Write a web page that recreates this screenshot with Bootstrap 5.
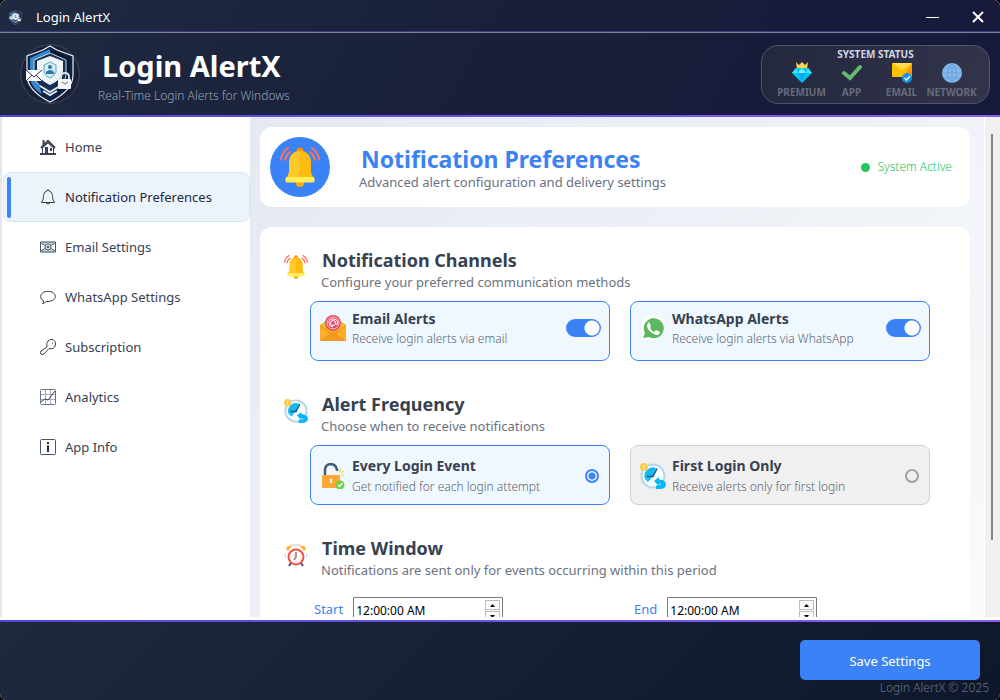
<!DOCTYPE html>
<html lang="en">
<head>
<meta charset="utf-8">
<meta name="viewport" content="width=device-width, initial-scale=1">
<title>Login AlertX</title>
<link href="https://cdn.jsdelivr.net/npm/bootstrap@5.3.0/dist/css/bootstrap.min.css" rel="stylesheet">
<style>
  body { font-family: "Noto Sans", "Open Sans", sans-serif; background: #000; font-size: 13px; line-height: 18px; color: #374151; }
  .app-window { border-radius: 6px; background: #fff; }
  .app-top { background: linear-gradient(120deg, #1f2a40, #191f3a 50%, #17193a); border-bottom: 2px solid; border-image: linear-gradient(90deg, #4f46e5, #8b5cf6) 1; }
  .title-bar { height: 33px; border-bottom: 1px solid #7d8096; box-shadow: inset 0 -1px #3f3a80; color: #fff; padding: 2px 0 0 8px; gap: 13px; }
  .win-btn { width: 45px; height: 30px; border: 0; background: none; color: #fff; }
  .app-header { height: 82px; padding: 0 10px 0 20px; }
  .brand { padding: 6px 0 0 18px; }
  .brand-title { font-size: 29px; line-height: 34px; font-weight: 700; color: #fff; padding-left: 4px; }
  .brand-sub { font-size: 12px; line-height: 18px; font-weight: 300; color: #94a3b8; }
  .status-panel { width: 229px; border: 1px solid #4f5468; border-radius: 17px; background: linear-gradient(100deg, #23283e, #32344a); height: 59px; margin-top: 1px; }
  .status-title { font-size: 10px; line-height: 16px; font-weight: 700; color: #cfd6e4; }
  .status-row { padding-left: 2px; }
  .status-item { width: 50px; font-size: 10px; line-height: 18px; font-weight: 700; color: #666a7a; }
  .side-nav { width: 250px; border-left: 2px solid #e5e5ec; background: #fff; padding-top: 5px; }
  .side-link { height: 50px; padding-left: 36px; gap: 9px; color: #374151; text-decoration: none; border: 1px solid transparent; border-radius: 8px; position: relative; margin-left: 1px; }
  .side-link.active { background: #ebf3fb; border-color: #d6e5f7; color: #1e293b; }
  .side-link.active::before { content: ""; position: absolute; left: 3px; top: 4px; bottom: 3px; width: 4px; border-radius: 2px; background: #3b82f6; }
  .workspace { background: linear-gradient(135deg, #e4e9f2, #f8fafc); padding: 10px 14px 0 10px; }
  .panel { background: #fff; border-radius: 12px; }
  .page-head { height: 80px; padding: 0 18px 0 10px; margin-bottom: 20px; }
  .page-icon { width: 60px; height: 60px; border-radius: 50%; background: #3b82f6; }
  .page-text { padding: 2px 0 0 29px; }
  .page-title { font-size: 23px; line-height: 28px; font-weight: 700; color: #3b82f6; padding-left: 2px; }
  .muted-line { color: #6b7280; }
  .state-dot { width: 9px; height: 9px; border-radius: 50%; background: #22c55e; }
  .state-text { color: #22c55e; font-size: 12px; font-weight: 300; }
  .settings { padding: 20px 40px 0 24px; }
  .setting-group { margin-bottom: 30px; }
  .group-text { padding-left: 13px; }
  .group-title { font-size: 18px; line-height: 26px; font-weight: 700; color: #374151; padding-left: 1px; }
  .group-icon { margin-top: 8px; width: 24px; height: 24px; }
  .choices { display: grid; grid-template-columns: 1fr 1fr; gap: 20px; margin: 10px 0 0 26px; }
  .choice { height: 60px; padding: 1px 8px 0 9px; gap: 6px; border: 1px solid #3b82f6; border-radius: 8px; background: #f0f8ff; }
  .choice.channel { padding-bottom: 7px; }
  .choice.idle { background: #f0f0f0; border-color: #d0d0c4; }
  .choice-title { font-size: 14px; line-height: 22px; font-weight: 700; color: #374151; }
  .choice-sub { font-size: 12px; line-height: 20px; font-weight: 300; color: #5b6472; }
  .channel .choice-sub { line-height: 18px; }
  .switch-input { appearance: none; width: 35px; height: 18px; border-radius: 9px; background: radial-gradient(circle at 26px 9px, #fff 7px, #3b82f6 8px); margin: 0; }
  .radio-input { appearance: none; width: 14px; height: 14px; border-radius: 50%; border: 2px solid #9ca3af; margin: 0 2px 0 0; }
  .radio-input:checked { border-color: #3b82f6; background: radial-gradient(circle, #3b82f6 3px, transparent 4px); }
  .times { display: grid; grid-template-columns: 1fr 1fr; gap: 20px; margin: 18px 0 0 26px; }
  .times label { padding: 0 10px 0 4px; color: #3b82f6; line-height: 24px; }
  .time-box { width: 150px; height: 28px; border: 1px solid #7a7a7a; border-radius: 1px; padding: 2px 2px 2px 0; }
  .time-box input { border: 0; outline: 0; width: 1px; padding: 0 2px; font-size: 12px; color: #000; }
  .spinner-pair { gap: 1px; }
  .spin-btn { width: 15px; height: 10px; border: 1px solid #bcbcbc; background: #fbfbfb; padding: 0; line-height: 0; }
  .scroll-track { width: 16px; background: #f0f0f0; border-left: 1px solid #fff; padding-top: 17px; }
  .scroll-thumb { width: 2px; height: 84%; margin-left: 6px; background: #858585; }
  .app-footer { height: 80px; border-top: 2px solid; border-image: linear-gradient(90deg, #4f46e5, #8b5cf6) 1; background: linear-gradient(135deg, #1e293b, #0f172a); padding: 18px 20px 0; margin-top: 3px; }
  .save-btn { width: 180px; height: 40px; border: 0; border-radius: 5px; background: #3b82f6; color: #fff; padding-top: 2px; }
  .copyright { color: #64748b; font-size: 12px; font-weight: 300; line-height: 16px; margin-right: -9px; }
  svg { display: block; flex-shrink: 0; }
</style>
</head>
<body>
<svg width="0" height="0" class="position-absolute">
  <defs>
    <symbol id="bell" viewBox="0 0 40 40">
      <g fill="none" stroke="#ff7058" stroke-width="2" stroke-linecap="round"><path d="M8 1Q2 5 1 12M10 5Q6 8 5 13M32 1Q38 5 39 12M30 5Q34 8 35 13"/></g>
      <circle cx="20" cy="4" r="3.500" fill="#ff9100"/><circle cx="20" cy="36" r="4" fill="#ffab00"/>
      <path d="M20 4C12 4 9 10 9 16v9l-3 8h28l-3-8v-9C31 10 28 4 20 4z" fill="#ffca28"/>
      <path d="M20 4c8 0 11 6 11 12v9l3 8H20z" fill="#ffb300" opacity=".6"/>
      <rect x="5.500" y="30" width="29" height="5.500" rx="1.500" fill="#ffee58"/>
    </symbol>
    <symbol id="logo" viewBox="0 0 60 60">
      <circle cx="30" cy="30" r="29.300" fill="#1b2036" stroke="#3f4a61"/>
      <path d="M30 2L37 6 53 12V31C53 43 44 51 30 58 16 51 7 43 7 31V12L23 6z" fill="#0d2343" stroke="#e6edf5" stroke-width="1.200"/>
      <path d="M30 5L23 8 10 14V32c0 8 5 14 12 18L15 30V18l15-7z" fill="#3389d0"/>
      <path d="M30 5v6l15 7v12l-7 20c8-4 12-10 12-18V14L37 8z" fill="#081a34"/>
      <path d="M30 9L46 16V30C46 38 40 43 30 48 20 43 14 38 14 30V16z" fill="#162f50" stroke="#cad8e5"/>
      <path d="M30 12L43 17V26C43 33 38 37 30 41 22 37 17 33 17 26V17z" fill="#eef3f6"/>
      <path d="M30 18l6 3v7q-1 4-6 6-5-2-6-6v-7z" fill="#d9edf7" stroke="#5aa5cc"/>
      <circle cx="30" cy="23" r="2" fill="#2878ac"/><path d="M26 30v-2q4-4 8 0v2z" fill="#2878ac"/>
      <path d="M20 42l10 6 10-6M23 47l7 4 7-4" stroke="#d7e4ee" stroke-width="2" fill="none"/>
      <path d="M6 26h16v11H6z" fill="#fff"/><path d="M6 26l8 7 8-7M6 37l6-6M22 37l-6-6" fill="none" stroke="#2b3543"/>
      <path d="M41 36v-3q0-4 4-4t4 4v3" fill="none" stroke="#d5dce4" stroke-width="2"/><rect x="38" y="35" width="13" height="10" rx="1" fill="#f5f6f7"/><path d="M42 38l3 2 3-2" fill="none" stroke="#626c78"/>
    </symbol>
    <symbol id="clock" viewBox="0 0 26 26">
      <circle cx="13" cy="13" r="11.500" fill="#fafdff" stroke="#b4d6ea" stroke-width="2"/>
      <path d="M13 13L16 5A8.500 8.500 0 0 0 5 16z" fill="#12b9f5"/>
      <path d="M5 16l8-3-5 6z" fill="#12b9f5"/>
      <path d="M7 13.500h6l4-8" stroke="#0d5778" stroke-width="1.500" fill="none"/>
      <path d="M14 18l5-4v2.500c5 0 7 3 7 5 0 3-3 4.500-6 4.500h-4v-3.500h4q2-1.500-1-2V23z" fill="#08b6f5"/>
      <circle cx="4" cy="4" r="4" fill="#ffc847"/><path d="M4 2v4M3 3l1-1M3 6h2" stroke="#fff3bb" fill="none"/>
    </symbol>
  </defs>
</svg>

<div class="app-window vh-100 d-flex flex-column overflow-hidden">
  <div class="app-top">
    <div class="title-bar d-flex align-items-center">
      <svg width="15" height="15"><use href="#logo"/></svg>
      <span class="me-auto">Login AlertX</span>
      <div class="d-flex">
        <button class="win-btn d-flex align-items-center justify-content-center" aria-label="Minimize"><svg width="13" height="13"><path d="M0 6.500h13" stroke="#fff"/></svg></button>
        <button class="win-btn d-flex align-items-center justify-content-center" aria-label="Close"><svg width="12" height="12"><path d="M1 1l10 10M11 1L1 11" stroke="#fff" stroke-width="2"/></svg></button>
      </div>
    </div>
    <header class="app-header d-flex align-items-center">
      <svg width="60" height="60"><use href="#logo"/></svg>
      <div class="brand me-auto">
        <h1 class="brand-title m-0">Login AlertX</h1>
        <div class="brand-sub mt-1">Real-Time Login Alerts for Windows</div>
      </div>
      <section class="status-panel text-center">
        <div class="status-title">SYSTEM STATUS</div>
        <div class="status-row d-flex justify-content-center">
          <div class="status-item d-flex flex-column align-items-center">
            <svg width="20" height="21" viewBox="0 0 20 21"><path d="M4 0l3 3 3-3 3 3 3-3-1 7H5z" fill="#ffd54f"/><path d="M4 6h12l4 5-10 10L0 11z" fill="#00c8f5"/><path d="M4 6L0 11h6zM16 6l4 5h-6z" fill="#40e1ff"/><path d="M6 11h8l-4 10z" fill="#0aacec"/><path d="M6 11l4-5 4 5z" fill="#7aebff"/></svg>
            <span>PREMIUM</span>
          </div>
          <div class="status-item d-flex flex-column align-items-center">
            <svg width="20" height="21" viewBox="0 0 20 21"><path d="M2 11l6 5L18 5" fill="none" stroke="#66bb6a" stroke-width="4" stroke-linecap="round"/></svg>
            <span>APP</span>
          </div>
          <div class="status-item d-flex flex-column align-items-center">
            <svg width="20" height="21" viewBox="0 0 20 21"><rect y="1" width="20" height="14" rx="1" fill="#ffc107"/><path d="M0 1l10 7 10-7z" fill="#ffdb4d"/><path d="M20 2v12h-9z" fill="#ff9800"/><circle cx="15" cy="16" r="5" fill="#1592e8"/><path d="M12.500 16l2 2 3.500-4" fill="none" stroke="#fff" stroke-width="1.300"/></svg>
            <span>EMAIL</span>
          </div>
          <div class="status-item d-flex flex-column align-items-center">
            <svg width="20" height="21" viewBox="0 0 20 21"><circle cx="10" cy="11" r="10" fill="#82b8eb"/><path d="M0 11h20M2 6h16M2 16h16M10 1v20M10 1Q1 11 10 21M10 1q9 10 0 20" fill="none" stroke="#649fd6" stroke-width=".7"/></svg>
            <span>NETWORK</span>
          </div>
        </div>
      </section>
    </header>
  </div>

  <div class="d-flex flex-grow-1 overflow-hidden">
    <nav class="side-nav flex-shrink-0">
      <a href="#" class="side-link d-flex align-items-center"><svg width="16" height="16"><path d="M1 9L8 2l7 7M3.500 1v5" fill="none" stroke="#374151" stroke-width="2"/><path d="M2.500 9v6h11V9L8 4z" fill="#fff" stroke="#374151"/><path d="M5 8h3v7H5zM10 9h2v3h-2z" fill="#374151"/><path d="M0 15h16" stroke="#374151" stroke-width="2"/></svg>Home</a>
      <a href="#" class="side-link active d-flex align-items-center" aria-current="page"><svg width="16" height="16" fill="none" stroke="#374151"><path d="M1.500 13.500h13q-2-2-2-7Q12 2.500 9 2V1H7v1q-3 .5-3.500 4.500 0 5-2 7zM6 14q2 2 4 0"/></svg>Notification Preferences</a>
      <a href="#" class="side-link d-flex align-items-center"><svg width="16" height="16" fill="none" stroke="#475569"><path d="M.5 3h15v10H.5zM1 4l5 3M15 4l-5 3M1 12l5-3M15 12l-5-3"/><path d="M1 3.500h14M1 12.500h14" stroke="#8d95a5" stroke-width="2"/><circle cx="8" cy="8" r="3"/><circle cx="8" cy="8" r="1" fill="#475569"/></svg>Email Settings</a>
      <a href="#" class="side-link d-flex align-items-center"><svg width="16" height="16" fill="none" stroke="#374151"><path d="M3.500 11.500Q.5 10.500 .6 7.500 1.500 2.300 8 2.300t7.400 5.200Q15 12 8 12.500H6Q5 14.500 2.500 14.500q1.500-1 1-3z"/></svg>WhatsApp Settings</a>
      <a href="#" class="side-link d-flex align-items-center"><svg width="16" height="16" fill="none" stroke="#374151"><path d="M7 8Q6 4 8 2t5-1.500q3 1.500 2.500 5.500-1.500 5-6.500 3.500L4 15q-1.500 1-3 0-1-1.500 0-3zM12 4h1"/></svg>Subscription</a>
      <a href="#" class="side-link d-flex align-items-center"><svg width="16" height="16" fill="none"><rect x=".5" y=".5" width="15" height="15" rx="1" stroke="#64748b"/><path d="M5.500 1v14M10.500 1v14M1 5.500h14M1 10.500h14" stroke="#a5abb8"/><path d="M1 13l4-3 3 1 7-9" stroke="#374151"/></svg>Analytics</a>
      <a href="#" class="side-link d-flex align-items-center"><svg width="16" height="16" fill="none" stroke="#475569"><rect x=".5" y=".5" width="15" height="15" rx="1"/><path d="M8 6.500V13M8 3v2" stroke="#1e293b" stroke-width="2"/></svg>App Info</a>
    </nav>

    <main class="workspace flex-grow-1 overflow-hidden">
      <div class="panel page-head d-flex align-items-center">
        <div class="page-icon d-flex align-items-center justify-content-center"><svg width="40" height="40"><use href="#bell"/></svg></div>
        <div class="page-text me-auto">
          <h2 class="page-title m-0">Notification Preferences</h2>
          <div class="muted-line">Advanced alert configuration and delivery settings</div>
        </div>
        <span class="state-dot me-2"></span><span class="state-text">System Active</span>
      </div>

      <div class="panel settings">
        <section class="setting-group">
          <div class="d-flex">
            <svg class="group-icon"><use href="#bell"/></svg>
            <div class="group-text">
              <h3 class="group-title m-0">Notification Channels</h3>
              <div class="muted-line">Configure your preferred communication methods</div>
            </div>
          </div>
          <div class="choices">
            <label class="choice channel d-flex align-items-center">
              <svg width="26" height="26"><path d="M0 10l13-8 13 8v16H0z" fill="#e79817"/><path d="M0 10l13 9 13-9L20 7H6z" fill="#f4bf22"/><path d="M0 26l13-10 13 10z" fill="#f39a23"/><path d="M0 11l10 8L0 26zM26 11l-10 8 10 7z" fill="#ffad29"/><circle cx="13" cy="8" r="8" fill="#ef4864"/><circle cx="13" cy="8" r="6" fill="none" stroke="#ffc5cd"/><circle cx="13" cy="8" r="2.500" fill="none" stroke="#fff"/><path d="M15.500 6v3q2 2 2-1 0-4-4.500-4T9 8t4 4" fill="none" stroke="#fff"/></svg>
              <span class="me-auto"><span class="choice-title d-block">Email Alerts</span><span class="choice-sub d-block">Receive login alerts via email</span></span>
              <input class="switch-input" type="checkbox" role="switch" checked>
            </label>
            <label class="choice channel d-flex align-items-center">
              <svg width="26" height="26"><path d="M1 25l2-6a12 12 0 1 1 5 4z" fill="#fff"/><path d="M3 23l2-5a10 10 0 1 1 4 4z" fill="#5cb85f"/><path d="M9 7l2 4-1 2q2 3 4 4l2-2 4 2q0 3-4 3Q8 17 7 11q0-3 2-4z" fill="#fff"/></svg>
              <span class="me-auto"><span class="choice-title d-block">WhatsApp Alerts</span><span class="choice-sub d-block">Receive login alerts via WhatsApp</span></span>
              <input class="switch-input" type="checkbox" role="switch" checked>
            </label>
          </div>
        </section>

        <section class="setting-group">
          <div class="d-flex">
            <svg class="group-icon"><use href="#clock"/></svg>
            <div class="group-text">
              <h3 class="group-title m-0">Alert Frequency</h3>
              <div class="muted-line">Choose when to receive notifications</div>
            </div>
          </div>
          <div class="choices">
            <label class="choice d-flex align-items-center">
              <svg width="26" height="26"><path d="M5 13V7q0-5 5-6 6 0 7 6v1" fill="none" stroke="#425b78" stroke-width="2.500"/><rect x="2" y="12" width="18" height="13" rx="1" fill="#ffa733"/><path d="M11 16v4" stroke="#fff" stroke-width="2"/><circle cx="20" cy="22" r="4.500" fill="#6bd13d"/><path d="M18 22l1.500 1.500L22.500 20" fill="none" stroke="#fff" stroke-width="1.300"/><path d="M19 9l2-3M21 10l3-2M21 12h3" stroke="#ffe14a" stroke-width="1.500"/></svg>
              <span class="me-auto"><span class="choice-title d-block">Every Login Event</span><span class="choice-sub d-block">Get notified for each login attempt</span></span>
              <input class="radio-input" type="radio" name="frequency" checked>
            </label>
            <label class="choice idle d-flex align-items-center">
              <svg width="26" height="26"><use href="#clock"/></svg>
              <span class="me-auto"><span class="choice-title d-block">First Login Only</span><span class="choice-sub d-block">Receive alerts only for first login</span></span>
              <input class="radio-input" type="radio" name="frequency">
            </label>
          </div>
        </section>

        <section class="setting-group">
          <div class="d-flex">
            <svg class="group-icon" viewBox="0 0 24 24"><path d="M7 4V2h9v2" fill="none" stroke="#e1e5e8" stroke-width="2"/><path d="M2 6q1-4 6-3L4 8zM22 6q-1-4-6-3l4 5z" fill="#ffb32f"/><path d="M2 10L0 13l2 2M22 10l2 3-2 2" fill="#b4e7f7"/><path d="M7 20l-2 3M17 20l2 3" stroke="#46505b" stroke-width="2"/><circle cx="12" cy="14" r="7.500" fill="#fff6f2" stroke="#ef5350" stroke-width="2"/><path d="M12 9v5l-2 3" fill="none" stroke="#6c6b75" stroke-width="1.300"/></svg>
            <div class="group-text">
              <h3 class="group-title m-0">Time Window</h3>
              <div class="muted-line">Notifications are sent only for events occurring within this period</div>
            </div>
          </div>
          <div class="times">
            <div class="d-flex"><label for="start">Start</label>
              <div class="time-box d-flex"><input id="start" class="flex-grow-1" value="12:00:00 AM">
                <div class="spinner-pair d-flex flex-column"><button class="spin-btn d-flex align-items-center justify-content-center" aria-label="Start later"><svg width="5" height="3"><path d="M0 3L2.500 0 5 3z"/></svg></button><button class="spin-btn d-flex align-items-center justify-content-center" aria-label="Start earlier"><svg width="5" height="3"><path d="M0 0l2.500 3L5 0z"/></svg></button></div></div></div>
            <div class="d-flex"><label for="end">End</label>
              <div class="time-box d-flex"><input id="end" class="flex-grow-1" value="12:00:00 AM">
                <div class="spinner-pair d-flex flex-column"><button class="spin-btn d-flex align-items-center justify-content-center" aria-label="End later"><svg width="5" height="3"><path d="M0 3L2.500 0 5 3z"/></svg></button><button class="spin-btn d-flex align-items-center justify-content-center" aria-label="End earlier"><svg width="5" height="3"><path d="M0 0l2.500 3L5 0z"/></svg></button></div></div></div>
          </div>
        </section>
      </div>
    </main>
    <div class="scroll-track flex-shrink-0"><div class="scroll-thumb"></div></div>
  </div>

  <footer class="app-footer d-flex flex-column align-items-end flex-shrink-0">
    <button class="save-btn">Save Settings</button>
    <div class="copyright">Login AlertX © 2025</div>
  </footer>
</div>
<script src="https://cdn.jsdelivr.net/npm/bootstrap@5.3.0/dist/js/bootstrap.bundle.min.js"></script>
</body>
</html>
